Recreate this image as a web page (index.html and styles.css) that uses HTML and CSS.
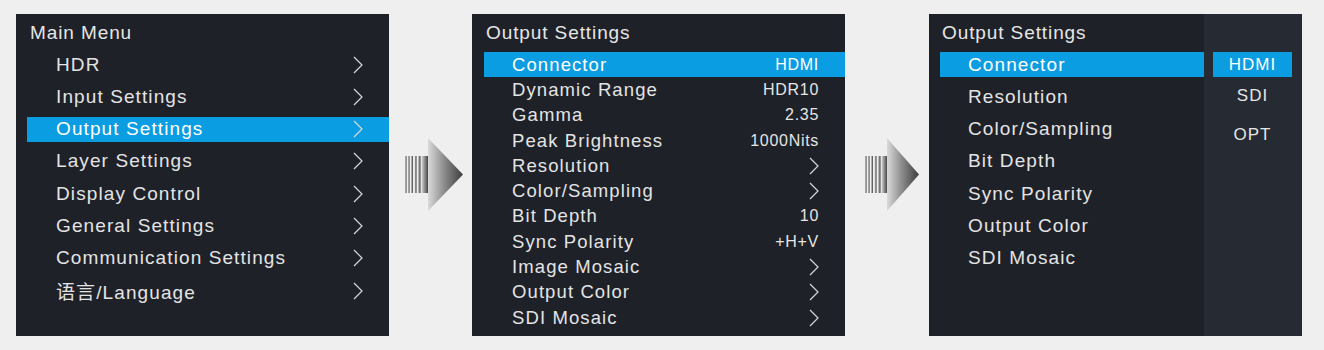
FILE: index.html
```html
<!DOCTYPE html>
<html lang="en">
<head>
	<meta charset="utf-8">
	<title>Output Settings menu</title>
	<link rel="stylesheet" href="styles.css">
</head>
<body>
<div class="page">
	<div class="panel main_menu">
		<div class="title">Main Menu</div>
		<ul class="list">
			<li class="row">HDR<svg class="chev" viewBox="0 0 10 18"><polyline points="1,1 9,9 1,17"/></svg></li>
			<li class="row">Input Settings<svg class="chev" viewBox="0 0 10 18"><polyline points="1,1 9,9 1,17"/></svg></li>
			<li class="row on">Output Settings<svg class="chev" viewBox="0 0 10 18"><polyline points="1,1 9,9 1,17"/></svg></li>
			<li class="row">Layer Settings<svg class="chev" viewBox="0 0 10 18"><polyline points="1,1 9,9 1,17"/></svg></li>
			<li class="row">Display Control<svg class="chev" viewBox="0 0 10 18"><polyline points="1,1 9,9 1,17"/></svg></li>
			<li class="row">General Settings<svg class="chev" viewBox="0 0 10 18"><polyline points="1,1 9,9 1,17"/></svg></li>
			<li class="row">Communication Settings<svg class="chev" viewBox="0 0 10 18"><polyline points="1,1 9,9 1,17"/></svg></li>
			<li class="row lang">语言/Language<svg class="chev" viewBox="0 0 10 18"><polyline points="1,1 9,9 1,17"/></svg></li>
		</ul>
	</div>

	<div class="arrow arrow_1">
		<svg width="60" height="74" viewBox="0 0 60 74">
			<defs>
				<linearGradient id="ag1" x1="0" y1="0" x2="1" y2="0">
					<stop offset="0" stop-color="#dadada"/>
					<stop offset="0.45" stop-color="#8e8e8e"/>
					<stop offset="1" stop-color="#3c3c3c"/>
				</linearGradient>
			</defs>
			<g fill="url(#ag1)">
				<rect x="0" y="18" width="1.5" height="37"/>
				<rect x="3" y="18" width="1.5" height="37"/>
				<rect x="6" y="18" width="2" height="37"/>
				<rect x="9.5" y="18" width="2" height="37"/>
				<rect x="13" y="18" width="2.5" height="37"/>
				<rect x="16.5" y="18" width="7" height="37"/>
				<polygon points="23,0 58,36.5 23,73"/>
			</g>
		</svg>
	</div>

	<div class="panel output_menu">
		<div class="title">Output Settings</div>
		<ul class="list">
			<li class="row on">Connector<span class="val">HDMI</span></li>
			<li class="row">Dynamic Range<span class="val">HDR10</span></li>
			<li class="row">Gamma<span class="val">2.35</span></li>
			<li class="row">Peak Brightness<span class="val">1000Nits</span></li>
			<li class="row">Resolution<svg class="chev" viewBox="0 0 10 18"><polyline points="1,1 9,9 1,17"/></svg></li>
			<li class="row">Color/Sampling<svg class="chev" viewBox="0 0 10 18"><polyline points="1,1 9,9 1,17"/></svg></li>
			<li class="row">Bit Depth<span class="val">10</span></li>
			<li class="row">Sync Polarity<span class="val">+H+V</span></li>
			<li class="row">Image Mosaic<svg class="chev" viewBox="0 0 10 18"><polyline points="1,1 9,9 1,17"/></svg></li>
			<li class="row">Output Color<svg class="chev" viewBox="0 0 10 18"><polyline points="1,1 9,9 1,17"/></svg></li>
			<li class="row">SDI Mosaic<svg class="chev" viewBox="0 0 10 18"><polyline points="1,1 9,9 1,17"/></svg></li>
		</ul>
	</div>

	<div class="arrow arrow_2">
		<svg width="60" height="74" viewBox="0 0 60 74">
			<defs>
				<linearGradient id="ag2" x1="0" y1="0" x2="1" y2="0">
					<stop offset="0" stop-color="#dadada"/>
					<stop offset="0.45" stop-color="#8e8e8e"/>
					<stop offset="1" stop-color="#3c3c3c"/>
				</linearGradient>
			</defs>
			<g fill="url(#ag2)">
				<rect x="0" y="18" width="1.5" height="37"/>
				<rect x="3" y="18" width="1.5" height="37"/>
				<rect x="6" y="18" width="2" height="37"/>
				<rect x="9.5" y="18" width="2" height="37"/>
				<rect x="13" y="18" width="2.5" height="37"/>
				<rect x="16.5" y="18" width="6" height="37"/>
				<polygon points="22,0 54,36.5 22,73"/>
			</g>
		</svg>
	</div>

	<div class="panel connector_menu">
		<div class="side">
			<div class="title">Output Settings</div>
			<ul class="list">
				<li class="row on">Connector</li>
				<li class="row">Resolution</li>
				<li class="row">Color/Sampling</li>
				<li class="row">Bit Depth</li>
				<li class="row">Sync Polarity</li>
				<li class="row">Output Color</li>
				<li class="row">SDI Mosaic</li>
			</ul>
		</div>
		<ul class="opts">
			<li class="opt on">HDMI</li>
			<li class="opt">SDI</li>
			<li class="opt opt_last">OPT</li>
		</ul>
	</div>
</div>
</body>
</html>
```

FILE: styles.css
```css
*	{margin:0;padding:0;box-sizing:border-box;}
ul	{list-style:none;}
body	{font-family:"Liberation Sans", Arial, Helvetica, sans-serif;color:#e6e6e6;background-color:#efefef;overflow:hidden;}
.page	{display:flex;align-items:flex-start;padding:14px 0 0 16px;}

.panel	{width:373px;height:322px;background-color:#1e2128;padding-top:6px;}
.panel .title	{height:25px;line-height:25px;font-size:19px;letter-spacing:0.9px;}
.panel .list	{margin-top:7px;}
.panel .row	{display:flex;justify-content:space-between;align-items:center;height:25px;font-size:19px;letter-spacing:1.1px;color:#e4e4e4;}
.panel .row.on	{background-color:#0b9de2;color:#fff;}
.panel .chev	{width:10px;height:18px;fill:none;stroke:#d8d8d8;stroke-width:1.2;}

.main_menu	{padding-left:11px;}
.main_menu .title	{padding-left:3px;}
.main_menu .row	{padding:0 26px 0 29px;margin-bottom:7.3px;}
.main_menu .row.lang	{margin-top:6px;font-family:"Liberation Sans", "Noto Sans CJK SC", sans-serif;}

.output_menu	{padding-left:12px;}
.output_menu .title	{padding-left:2px;}
.output_menu .row	{height:25.3px;font-size:18.5px;padding:0 26px 0 28px;}
.output_menu .row.on	{height:25px;margin-bottom:0.3px;}
.output_menu .val	{font-size:16px;letter-spacing:0.7px;}

.connector_menu	{display:flex;padding:0;}
.connector_menu .side	{flex:1;padding:6px 0 0 11px;}
.connector_menu .title	{padding-left:2px;}
.connector_menu .row	{padding-left:28px;margin-bottom:7.3px;}
.connector_menu .opts	{width:98px;background-color:#252a33;padding:38px 10px 0 9px;}
.connector_menu .opt	{height:25px;line-height:25px;text-align:center;font-size:17px;letter-spacing:1px;margin-bottom:6px;}
.connector_menu .opt.on	{background-color:#0b9de2;color:#fff;}
.connector_menu .opt_last	{margin-top:14px;}

.arrow	{width:83px;margin-top:124px;}
.arrow_1 svg	{margin-left:16px;}
.arrow_2	{width:84px;}
.arrow_2 svg	{margin-left:20px;}
```
